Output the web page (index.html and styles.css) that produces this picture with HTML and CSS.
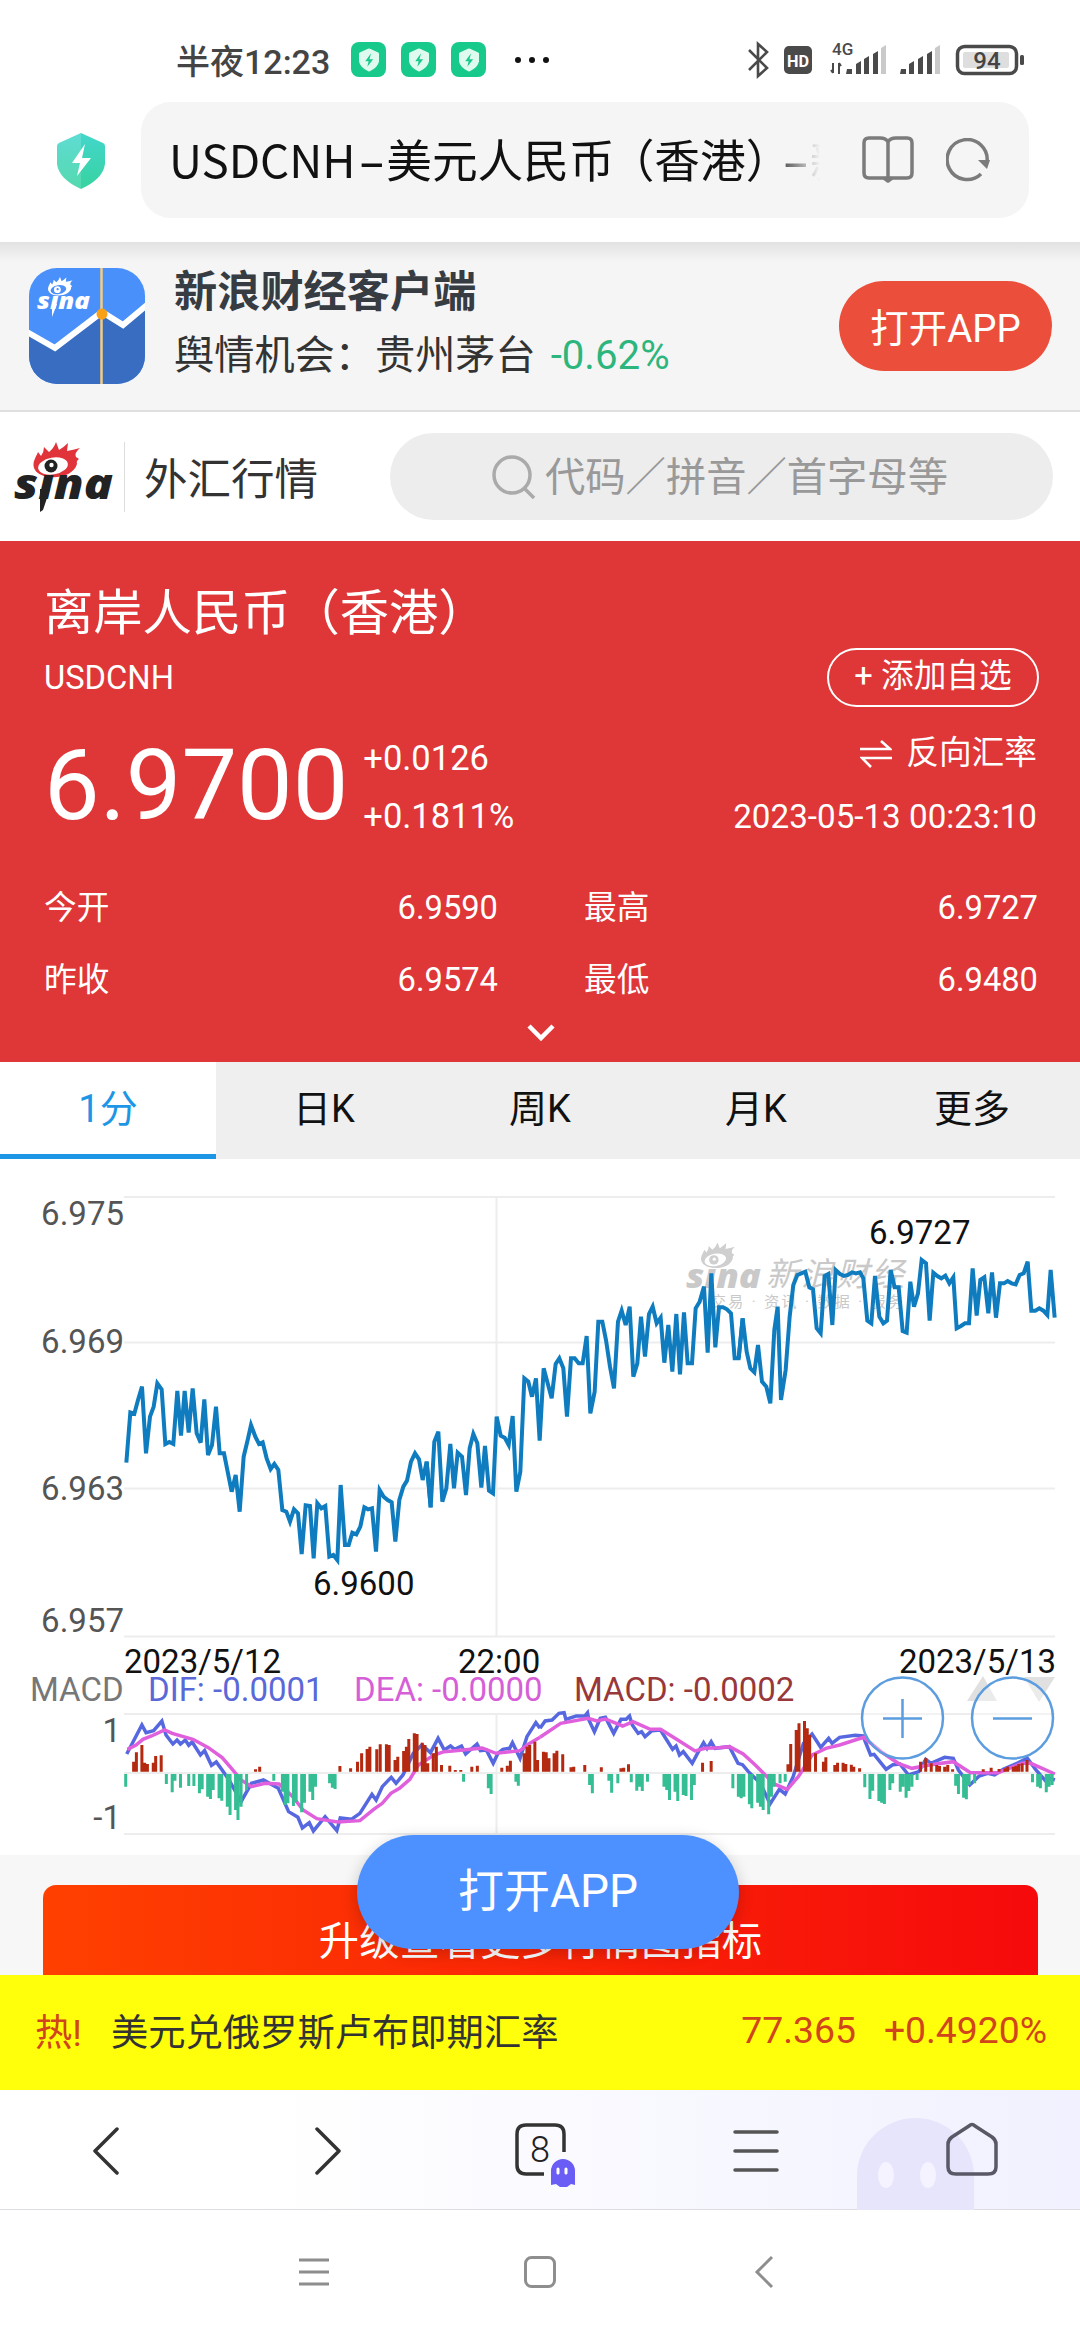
FILE: index.html
```html
<!DOCTYPE html>
<html lang="zh-CN">
<head>
  <meta charset="UTF-8" />
  <meta name="viewport" content="width=device-width, initial-scale=1.0" />
  <title>USDCNH-美元人民币（香港）</title>
  <link rel="stylesheet" href="styles.css">
</head>
<body>
  <!-- shared shapes -->
  <svg width="0" height="0" class="defs">
    <symbol id="shield" viewBox="0 0 48 56">
      <path d="M24 0 L46 10 Q48 11 48 13 V31 Q46 46 24 56 Q2 46 0 31 V13 Q0 11 2 10 Z"/>
    </symbol>
    <symbol id="eye" viewBox="0 0 48 36">
      <path d="M2 26 C0 20 4 15 6 10 L9 14 Q12 10 12 5 L17 10 Q22 6 24 0 L27 8 Q32 5 36 1 L35 9 Q41 8 48 6 Q42 11 44 15 L47 17 Q44 19 45 22 C42 32 30 36 18 35 C9 34 4 31 2 26 Z"/>
      <ellipse cx="21" cy="24" rx="15" ry="8.500" class="white" transform="rotate(-10 21 24)"/>
      <circle cx="19" cy="24" r="6.500" class="pupil"/>
      <circle cx="19.500" cy="23" r="2.200" class="white"/>
    </symbol>
  </svg>

  <div class="status">
    <span class="clock">半夜12:23</span>
    <div class="apps">
      <span class="app"><svg width="20" height="24" viewBox="0 0 48 56"><use href="#shield" fill="#dffbf0"/><path d="M29 12 L15 31 H23 L20 44 L34 26 H25 Z" fill="#18c98c"/></svg></span>
      <span class="app"><svg width="20" height="24" viewBox="0 0 48 56"><use href="#shield" fill="#dffbf0"/><path d="M29 12 L15 31 H23 L20 44 L34 26 H25 Z" fill="#18c98c"/></svg></span>
      <span class="app"><svg width="20" height="24" viewBox="0 0 48 56"><use href="#shield" fill="#dffbf0"/><path d="M29 12 L15 31 H23 L20 44 L34 26 H25 Z" fill="#18c98c"/></svg></span>
    </div>
    <div class="dots"><i></i><i></i><i></i></div>
    <svg class="signals" width="280" height="40" viewBox="744 39 280 40">
      <path d="M748 49 L766 67 L757 75 V43 L766 51 L748 69" fill="none" stroke="#4a4a4a" stroke-width="2.600"/>
      <rect x="783" y="45" width="28" height="28" rx="5" fill="#4a4a4a"/>
      <text x="797" y="65.500" font-size="17" font-weight="700" fill="#fff" text-anchor="middle" textLength="22" lengthAdjust="spacingAndGlyphs">HD</text>
      <text x="831" y="54" font-size="17" font-weight="500" fill="#4a4a4a">4G</text>
      <path d="M832 62 V72 M830 69 L832 72 M838 73 V62 M840 65 L838 62" fill="none" stroke="#4a4a4a" stroke-width="2"/>
      <g fill="#4a4a4a">
        <path d="M846 68 h5 v5 h-6z M855 63 l5 -3 v13 h-5z M863 58 l5 -3 v18 h-5z M872 53 l5 -3 v23 h-5z"/>
        <path d="M900 68 h5 v5 h-6z M908 63 l5 -3 v13 h-5z M917 58 l5 -3 v18 h-5z M926 53 l5 -3 v23 h-5z"/>
      </g>
      <path d="M880 47 l5 -3 v29 h-5z M934 47 l5 -3 v29 h-5z" fill="#c9c9c9"/>
      <rect x="956.500" y="45.500" width="59" height="27" rx="7" fill="#fff" stroke="#4a4a4a" stroke-width="3.500"/>
      <rect x="962" y="51" width="46" height="16" rx="2" fill="#dedede"/>
      <rect x="1019" y="54" width="4" height="10" rx="1.500" fill="#4a4a4a"/>
      <text x="986" y="68" font-size="24" font-weight="500" fill="#444" text-anchor="middle">94</text>
    </svg>
  </div>

  <div class="address">
    <svg class="safe" width="48" height="56" viewBox="0 0 48 56">
      <defs><linearGradient id="mint" x1="0" y1="0" x2="0" y2="1"><stop offset="0" stop-color="#43d6cc"/><stop offset="1" stop-color="#37d3a0"/></linearGradient></defs>
      <path d="M24 0 L46 10 Q48 11 48 13 V31 Q46 46 24 56 Q2 46 0 31 V13 Q0 11 2 10 Z" fill="url(#mint)"/>
      <path d="M24 0 L2 10 Q0 11 0 13 V31 Q2 46 24 56 Z" fill="#fff" opacity=".15"/>
      <path d="M28 11 L15 30 H23 L20 43 L34 25 H25 Z" fill="#fff"/>
    </svg>
    <div class="url">
      <span class="url-text">USDCNH<b class="dash">–</b>美元人民币<b class="po">（</b>香港<b class="pc">）</b><b class="dash">–</b>新</span>
      <svg width="52" height="48" viewBox="0 0 52 48" fill="none" stroke="#7b7b7b" stroke-width="3.500" stroke-linejoin="round">
        <path d="M26 42 V6 Q24 2 18 2 H7 Q2 2 2 7 V37 Q2 42 7 42 H45 Q50 42 50 37 V7 Q50 2 45 2 H34 Q28 2 26 6"/>
        <path d="M22 42 L26 45 L30 42"/>
      </svg>
      <svg width="44" height="44" viewBox="0 0 44 44">
        <path d="M35 36 A20 20 0 1 1 41 24" fill="none" stroke="#7b7b7b" stroke-width="3.500"/>
        <path d="M32 22 H44 L41 31 Z" fill="#7b7b7b"/>
      </svg>
    </div>
  </div>

  <div class="banner">
    <svg width="116" height="116" viewBox="0 0 116 116">
      <defs><clipPath id="round"><rect width="116" height="116" rx="28"/></clipPath></defs>
      <g clip-path="url(#round)">
        <rect width="116" height="116" fill="#4a90fb"/>
        <path d="M0 67 L26 81 L73 46 L94 58 L116 40 V116 H0 Z" fill="#386dc2"/>
        <path d="M-2 64 L26 80 L73 44 L94 57 L118 37" fill="none" stroke="#fff" stroke-width="6"/>
        <path d="M72.500 0 V116" stroke="#f3cd80" stroke-width="2.500"/>
        <circle cx="73" cy="46" r="5.500" fill="#f8a016"/>
      </g>
      <svg x="18" y="9" width="26" height="19" viewBox="0 0 48 36" fill="#fff" class="eye-app"><use href="#eye"/></svg>
      <text x="8" y="41" class="sina-word" font-size="23" fill="#fff" textLength="53" lengthAdjust="spacingAndGlyphs">sına</text>
      <path d="M23 36 L28 36 L23 49 Z" fill="#fff"/>
    </svg>
    <div class="banner-text">
      <div class="banner-title">新浪财经客户端</div>
      <div class="banner-sub">舆情机会：贵州茅台 <span>-0.62%</span></div>
    </div>
    <a class="open-small">打开APP</a>
  </div>

  <div class="topbar">
    <svg width="102" height="72" viewBox="0 0 102 72">
      <svg x="19" y="1" width="48" height="36" viewBox="0 0 48 36" fill="#e0343a"><use href="#eye"/></svg>
      <text x="1" y="58" class="sina-word" font-size="42" fill="#222" textLength="99" lengthAdjust="spacingAndGlyphs">sına</text>
      <path d="M27 48 L37 48 L30 69 L27 71 Z" fill="#222"/>
    </svg>
    <span class="channel">外汇行情</span>
    <div class="search">
      <svg width="44" height="44" viewBox="0 0 44 44" fill="none" stroke="#aaa" stroke-width="3.500"><circle cx="20" cy="20" r="18"/><path d="M32 33 L42 43"/></svg>
      <span>代码／拼音／首字母等</span>
    </div>
  </div>

  <div class="quote">
    <div class="name">离岸人民币（香港）</div>
    <div class="row code-row">
      <span>USDCNH</span>
      <a class="add">+ 添加自选</a>
    </div>
    <div class="row price-row">
      <div class="price">6.9700</div>
      <div class="change"><span>+0.0126</span><span>+0.1811%</span></div>
      <div class="side">
        <span class="reverse"><svg width="32" height="28" viewBox="0 0 32 28" fill="none" stroke="#fff" stroke-width="2.600"><path d="M0 9 H30 L21 1 M32 18 H2 L11 27"/></svg>反向汇率</span>
        <span class="time">2023-05-13 00:23:10</span>
      </div>
    </div>
    <div class="stats">
      <div><span>今开</span><span>6.9590</span></div>
      <div><span>最高</span><span>6.9727</span></div>
      <div><span>昨收</span><span>6.9574</span></div>
      <div><span>最低</span><span>6.9480</span></div>
    </div>
    <svg class="more" width="30" height="20" viewBox="0 0 30 20"><path d="M3 3 L15 15 L27 3" fill="none" stroke="#fff" stroke-width="4.500"/></svg>
  </div>

  <div class="tabs">
    <a class="active">1分</a>
    <a>日K</a>
    <a>周K</a>
    <a>月K</a>
    <a>更多</a>
  </div>

  <svg class="chart" width="1080" height="696" viewBox="0 1159 1080 696">
    <!-- watermark -->
    <g class="mark">
      <svg x="700" y="1242" width="35" height="27" viewBox="0 0 48 36" fill="#cfcfcf"><use href="#eye"/></svg>
      <text x="686" y="1288" class="sina-word" font-size="32" textLength="75" lengthAdjust="spacingAndGlyphs">sına</text>
      <text x="766" y="1286" font-size="34" font-style="italic" textLength="138">新浪财经</text>
      <text x="711" y="1307" font-size="14" textLength="192">交易 · 资讯 · 数据 · 服务</text>
    </g>

    <path class="grid" d="M124 1197 H1055 M124 1342.500 H1055 M124 1488.500 H1055 M124 1636.500 H1055 M496.500 1197 V1636 M124 1714 H1055 M124 1773 H1055 M124 1834 H1055 M496.500 1714 V1834"/>

    <g class="axis" text-anchor="end">
      <text x="124" y="1225">6.975</text>
      <text x="124" y="1353">6.969</text>
      <text x="124" y="1500">6.963</text>
      <text x="124" y="1632">6.957</text>
      <text x="121" y="1742">1</text>
      <text x="121" y="1829">-1</text>
    </g>

    <g class="price-line" transform="translate(100 1170) scale(.33333)">
      <polyline points="79,878 91,727 103,731 114,690 126,650 138,850 150,740 161,710 172,640 185,658 196,822 208,816 220,822 232,663 243,797 254,663 266,788 278,655 290,790 302,818 313,688 324,855 336,825 348,710 359,850 372,850 384,910 395,965 407,915 419,1025 431,860 443,810 453,765 466,800 477,822 488,817 500,865 512,897 523,882 535,900 547,1020 559,1025 570,1055 582,1018 594,1030 605,1152 617,1006 630,1008 641,1165 652,1000 664,1015 676,1008 688,1160 700,1155 712,1170 722,945 735,1125 746,1125 757,1088 769,1093 781,1070 793,1012 804,1018 816,1015 828,1145 839,960 851,980 863,990 875,997 886,1115 898,990 910,950 921,932 933,875 945,850 957,868 968,930 980,875 992,1012"/>
      <polyline transform="translate(960)" points="20,875 32,1012 43,815 55,785 67,995 79,955 91,822 102,955 113,848 126,860 138,975 149,835 160,792 172,820 184,953 195,828 207,962 219,970 230,740 242,797 254,803 266,825 278,738 289,965 301,905 313,625 325,635 336,680 348,625 359,812 371,595 383,640 395,685 407,582 418,565 430,595 441,740 453,565 464,565 476,580 488,580 500,498 511,730 524,665 535,455 547,455 558,510 570,590 582,655 594,455 605,422 617,465 629,410 640,620 652,580 663,440 675,560 687,432 698,410 710,460 722,443 733,578 745,465 757,605 769,432 780,613 792,427 803,580 816,580 827,415 839,395 852,350 863,548 874,310 886,532 897,412 909,412 921,418 933,430 944,565 956,565 968,445"/>
      <polyline transform="translate(1920)" points="-4,565 8,445 20,545 31,595 43,607 54,525 66,635 79,650 91,700 103,480 113,410 123,690 137,600 149,440 160,345 172,315 184,310 196,305 208,352 219,358 230,475 242,490 254,318 265,312 277,465 287,300 300,312 312,318 324,315 336,307 348,310 360,307 370,325 382,452 394,460 405,318 418,440 430,460 441,452 452,300 464,352 476,352 488,483 500,488 511,335 522,410 534,370 545,270 558,280 569,452 580,308 592,318 604,325 616,317 628,340 640,322 650,475 663,468 675,460 687,460 698,295 710,437 721,330 733,322 745,430 756,307 768,443 780,340 792,340 803,333 815,340 827,343 839,315 851,310 863,275 874,422 886,422 898,415 910,422 922,435 932,300 944,443"/>
    </g>

    <g class="label">
      <text x="869" y="1244">6.9727</text>
      <text x="313" y="1595">6.9600</text>
      <text x="124" y="1673">2023/5/12</text>
      <text x="458" y="1673">22:00</text>
      <text x="1056" y="1673" text-anchor="end">2023/5/13</text>
    </g>

    <text x="30" y="1701" fill="#777">MACD</text>
    <text x="148" y="1701" fill="#5a68d8">DIF: -0.0001</text>
    <text x="354" y="1701" fill="#d65fd8">DEA: -0.0000</text>
    <text x="574" y="1701" fill="#98383a">MACD: -0.0002</text>

    <g class="macd" transform="translate(0 1620) scale(.3444 .3333)">
      <polyline class="dif" points="368,402 412,315 424,338 446,332 470,303 482,345 502,372 514,360 524,372 538,360 548,376 558,366 582,405 594,392 614,436 628,426 645,450 665,480 700,545 730,490 765,480 808,505 838,575 865,592 878,624 898,608 910,633 944,590 978,632 988,594 1020,598 1045,580 1080,523 1092,540 1110,500 1136,472 1150,490 1170,465 1200,400 1225,375 1250,398 1272,355 1290,390 1308,378 1320,388 1340,378 1352,402 1385,372 1395,392 1412,390 1432,430 1446,400 1460,388 1480,385 1488,368 1510,415 1530,350 1556,308 1568,325"/>
      <polyline class="dea" points="370,388 395,375 415,358 440,348 478,330 500,340 560,358 605,383 645,413 672,445 700,480 730,500 770,490 810,492 850,530 880,570 920,596 980,606 1045,602 1085,568 1110,550 1135,520 1160,505 1190,478 1215,435 1260,405 1290,395 1345,390 1400,384 1440,400 1510,392 1535,372 1568,352"/>
      <path id="up1" class="up"/>
      <path id="down1" class="down"/>
    </g>
    <g class="macd" transform="translate(540 1620) scale(.3444 .3333)">
      <polyline class="dif" points="0,325 15,303 35,300 55,280 70,278 75,298 105,288 130,288 138,278 142,300 158,335 175,295 190,292 214,340 235,298 250,298 260,288 268,315 285,340 295,335 305,350 325,332 350,330 368,360 385,388 395,378 405,405 416,395 442,430 460,395 475,368 485,385 497,365 508,385 550,380 575,430 588,434 605,455 640,490 668,552 695,508 712,522 735,470 765,370 790,342 815,382 838,355 848,370 870,352 915,346 938,348 960,405 970,403 1005,448 1025,434 1045,432 1070,465 1100,455 1120,418 1135,430 1175,412 1200,415 1215,450 1248,495 1275,468 1300,460 1320,465 1345,448 1385,430 1415,415 1440,450 1470,485 1480,475 1495,480"/>
      <polyline class="dea" points="0,352 60,310 140,295 165,303 190,297 240,318 270,305 320,328 350,328 400,360 450,393 480,385 520,383 550,380 590,402 625,435 680,492 718,508 750,470 790,405 830,385 870,375 940,352 990,395 1040,430 1080,445 1130,435 1200,425 1250,458 1330,458 1400,430 1425,430 1495,462"/>
      <path id="up2" class="up"/>
      <path id="down2" class="down"/>
    </g>

    <path d="M967 1701 L983 1676 L997 1701 Z M1024 1677 H1055 L1039 1702 Z" fill="#e0e0e0"/>
    <g fill="#fff" fill-opacity=".35" stroke="#5c9ddf" stroke-width="2.500">
      <circle cx="902.500" cy="1718" r="40.500"/>
      <circle cx="1012.500" cy="1718" r="40.500"/>
      <path d="M883 1718.500 H922 M902.500 1699 V1738 M993 1718.500 H1032"/>
    </g>
  </svg>

  <div class="upgrade">
    <div class="upgrade-btn">升级查看更多行情图指标</div>
    <a class="open-big">打开APP</a>
  </div>

  <div class="hot">
    <span class="tag">热!</span>
    <span class="pair">美元兑俄罗斯卢布即期汇率</span>
    <span class="num">77.365</span>
    <span class="num">+0.4920%</span>
  </div>

  <div class="browser-nav">
    <svg width="1080" height="120" viewBox="0 2089 1080 120" fill="none" stroke="#333" stroke-width="3.500" stroke-linecap="round" stroke-linejoin="round">
      <path d="M857 2209 V2175 A58.500 58 0 0 1 974 2175 V2209 Z" fill="#e7e5fb" stroke="none"/>
      <ellipse cx="886" cy="2174" rx="8" ry="13" fill="#f4f3ff" stroke="none"/>
      <ellipse cx="928" cy="2174" rx="8" ry="13" fill="#f4f3ff" stroke="none"/>
      <path d="M117 2128 L95 2150 L117 2172 M317 2128 L339 2150 L317 2172"/>
      <path d="M544 2173 H526 Q517 2173 517 2164 V2133 Q517 2124 526 2124 H555 Q564 2124 564 2133 V2151" stroke-linecap="butt"/>
      <text x="540" y="2161" font-size="36" font-weight="300" text-anchor="middle" fill="#222" stroke="none">8</text>
      <path d="M551 2184 V2170 A12 12 0 0 1 575 2170 V2184 L571 2183 L567 2186 H560 L556 2183 Z" fill="#6a5df5" stroke="none"/>
      <path d="M558 2168 V2172 M566 2168 V2172" stroke="#fff" stroke-width="3"/>
      <path d="M735 2131 H777 M735 2150 H777 M735 2169 H777" stroke="#555"/>
      <path d="M969 2125 Q972 2122 975 2125 L992 2136 Q996 2139 996 2143 V2166 Q996 2173 988 2173 H956 Q948 2173 948 2166 V2143 Q948 2139 952 2136 Z" stroke="#5a5866"/>
    </svg>
  </div>

  <div class="system-nav">
    <svg width="34" height="34" viewBox="0 0 34 34"><path d="M2 5 H32 M2 17 H32 M2 29 H32"/></svg>
    <svg width="34" height="34" viewBox="0 0 34 34"><rect x="2.500" y="2.500" width="29" height="29" rx="6"/></svg>
    <svg width="34" height="34" viewBox="0 0 34 34"><path d="M24 2 L9 17 L24 32"/></svg>
  </div>

  <script>
    // x:y pairs, every pair is one MACD bar
    const bars = {
      up1: [455, '388:425 396:397 412:375 420:428 428:432 445:428 452:408 468:406 742:448 754:440 987:438 1018:445 1038:425 1050:400 1066:387 1074:380 1094:388 1104:373 1122:373 1130:375 1147:420 1155:410 1172:393 1180:380 1187:357 1203:340 1211:342 1226:368 1234:375 1242:430 1258:400 1267:380 1282:435 1306:437 1322:450 1338:450 1370:440 1386:437 1457:443 1473:437 1482:422 1522:400 1530:380 1538:375 1553:365 1561:420'],
      down1: [462, '365:500 483:492 500:517 508:482 524:503 548:498 563:498 579:520 587:508 603:530 611:537 619:510 636:535 644:542 660:560 668:585 684:570 691:600 700:560 716:510 795:482 820:515 828:555 836:550 852:558 860:545 876:577 884:548 900:515 908:540 916:500 957:490 965:503 973:507 1346:485 1418:505 1426:522 1498:485 1505:497'],
      up2: [455, '10:395 18:397 26:415 41:400 49:392 66:403 90:442 98:440 130:435 178:442 235:445 243:443 257:433 472:428 497:423 720:433 728:372 744:330 752:310 768:303 776:325 783:345 800:400 823:425 830:412 856:435 864:428 880:428 888:432 904:434 911:440 928:445 1105:425 1120:415 1136:430 1152:435 1160:438 1175:440 1184:435 1198:448 1287:448 1310:443 1333:447 1350:445 1358:440 1374:440 1382:437 1390:432 1400:430 1414:420'],
      down2: [462, '144:495 152:520 200:482 208:518 226:490 265:487 281:512 289:500 297:513 312:485 360:500 368:510 376:540 392:515 400:543 416:525 424:528 440:540 448:495 560:505 576:530 584:535 592:530 608:553 615:565 632:548 640:560 648:570 664:583 672:530 680:500 697:490 712:485 943:502 958:537 966:512 984:543 992:548 1000:552 1016:510 1024:490 1046:515 1054:500 1063:533 1071:513 1080:500 1095:480 1207:497 1215:522 1230:533 1238:538 1246:495 1262:490 1430:487 1445:500 1453:505 1470:517 1478:500 1487:495']
    };

    for (const id in bars) {
      const base = bars[id][0];
      const d = bars[id][1].split(' ').map(p => {
        const xy = p.split(':');
        return 'M' + xy[0] + ' ' + base + 'V' + xy[1];
      }).join('');
      document.getElementById(id).setAttribute('d', d);
    }
  </script>
</body>
</html>
```

FILE: styles.css
```css
* {
  box-sizing: border-box;
}
body, html {
  margin: 0;
  padding: 0;
  background-color: #fff;
  color: #333;
  font-family: Roboto, "Noto Sans CJK SC", sans-serif;
}
body {
  width: 1080px;
  height: 2340px;
  overflow: hidden;
}
svg {
  display: block;
  flex: none;
}
svg text {
  font-family: Roboto, "Noto Sans CJK SC", sans-serif;
}
.defs {
  position: absolute;
}
/* eye colours are set per logo */
.white {
  fill: var(--white, #fff);
}
.pupil {
  fill: var(--pupil, #222);
}
.eye-app {
  --white: #4a90fb;
  --pupil: #fff;
}
.mark {
  --pupil: #cfcfcf;
}
svg .sina-word {
  font-family: "Open Sans", sans-serif;
  font-weight: 800;
  font-style: italic;
}

/* status bar */
.status {
  height: 102px;
  padding: 17px 55px 0 176px;
  display: flex;
  align-items: center;
}
.clock {
  width: 175px;
  font-size: 34px;
  font-weight: 500;
  color: #444;
  white-space: nowrap;
}
.apps {
  display: flex;
  gap: 15px;
}
.app {
  width: 35px;
  height: 35px;
  border-radius: 8px;
  background-color: #18c98c;
  display: flex;
  align-items: center;
  justify-content: center;
}
.dots {
  display: flex;
  gap: 8px;
  margin-left: 29px;
}
.dots i {
  width: 6px;
  height: 6px;
  border-radius: 3px;
  background-color: #111;
}
.signals {
  margin-left: auto;
}

/* address bar */
.address {
  height: 140px;
  padding-left: 57px;
  display: flex;
  align-items: flex-start;
}
.safe {
  margin-top: 31px;
}
.url {
  width: 888px;
  height: 116px;
  margin-left: 36px;
  padding-left: 28px;
  border-radius: 30px;
  background-color: #f5f5f5;
  display: flex;
  align-items: center;
}
.url-text {
  width: 651px;
  height: 72px;
  margin: -5px 42px 0 0;
  overflow: hidden;
  white-space: nowrap;
  font-family: "Noto Sans CJK SC", sans-serif;
  font-size: 45.7px;
  line-height: 72px;
  color: #111;
  -webkit-mask-image: linear-gradient(90deg, #000 92%, transparent 100%);
  mask-image: linear-gradient(90deg, #000 92%, transparent 100%);
}
.url-text b {
  font-weight: 400;
}
.url-text .dash {
  margin: 0 2px 0 4px;
  font-weight: 500;
}
.po {
  margin-left: -6px;
}
.pc {
  margin-right: -12px;
}
.url svg + svg {
  margin-left: 32px;
}

/* app banner */
.banner {
  height: 170px;
  padding: 0 28px 1px 29px;
  background: linear-gradient(#e2e2e2, #f5f5f5 20px);
  border-bottom: 2px solid #dfdfdf;
  display: flex;
  align-items: center;
}
.banner-text {
  margin-left: 29px;
}
.banner-title {
  font-size: 43.2px;
  line-height: 62px;
  font-weight: 700;
  color: #363c42;
}
.banner-sub {
  margin-bottom: 1px;
  font-size: 40.2px;
  line-height: 64px;
  white-space: nowrap;
}
.banner-sub span {
  margin-left: 5px;
  color: #2cb57c;
}
.open-small {
  width: 213px;
  height: 90px;
  margin-left: auto;
  border-radius: 45px;
  background-color: #eb4f3c;
  color: #fff;
  font-size: 38.4px;
  line-height: 95px;
  text-align: center;
}

/* channel + search */
.topbar {
  height: 129px;
  padding-left: 13px;
  display: flex;
  align-items: center;
}
.channel {
  height: 70px;
  margin-left: 9px;
  padding-left: 19px;
  border-left: 1px solid #ddd;
  font-size: 43.5px;
  line-height: 77px;
}
.search {
  width: 663px;
  height: 87px;
  margin-left: 72px;
  padding-left: 102px;
  border-radius: 44px;
  background-color: #ededed;
  color: #999;
  font-size: 40.3px;
  display: flex;
  align-items: center;
  gap: 9px;
}
.search span {
  margin-top: -6px;
}

/* quote */
.quote {
  height: 521px;
  padding: 38px 43px 0 44px;
  background-color: #df3638;
  color: #fff;
  font-size: 32.7px;
}
.name {
  font-size: 49.3px;
  line-height: 68px;
}
.row {
  display: flex;
  justify-content: space-between;
}
.code-row {
  align-items: center;
  height: 61px;
}
.add {
  width: 212px;
  height: 59px;
  margin-right: -2px;
  border: 2px solid #fff;
  border-radius: 30px;
  line-height: 53px;
  text-align: center;
}
.price-row {
  height: 130px;
  margin-top: 15px;
}
.price {
  font-size: 99px;
  line-height: 125px;
}
.change, .side {
  display: flex;
  flex-direction: column;
  line-height: 58px;
  padding-top: 6px;
}
.change {
  margin-left: 15px;
  font-size: 34.5px;
}
.side {
  margin-left: auto;
  margin-top: -7px;
  align-items: flex-end;
  line-height: 63px;
}
.reverse {
  display: flex;
  align-items: center;
  gap: 14px;
}
.time {
  font-size: 33.2px;
}
.stats {
  margin-top: 19px;
  display: grid;
  grid-template-columns: 454px 454px;
  column-gap: 86px;
  line-height: 72px;
}
.stats div {
  display: flex;
  justify-content: space-between;
}
.more {
  margin: 7px auto 0;
}

/* tabs */
.tabs {
  height: 97px;
  display: flex;
  background-color: #efefef;
}
.tabs a {
  flex: 1;
  color: #111;
  font-size: 38px;
  line-height: 95px;
  text-align: center;
}
.tabs .active {
  background-color: #fff;
  border-bottom: 5px solid #1e96e6;
  color: #1e96e6;
}

/* chart */
.chart text {
  font-size: 33px;
}
.chart .mark text {
  fill: #c9c9c9;
}
.chart .mark text:nth-of-type(3) {
  font-size: 15px;
}
.grid {
  fill: none;
  stroke: #ededed;
  stroke-width: 2;
}
.axis {
  fill: #555;
}
.label {
  fill: #111;
}
.price-line polyline {
  fill: none;
  stroke: #0e7cbf;
  stroke-width: 12;
}
.macd * {
  fill: none;
  vector-effect: non-scaling-stroke;
}
.dif {
  stroke: #5668e0;
  stroke-width: 3.500;
}
.dea {
  stroke: #e05fdc;
  stroke-width: 3.500;
}
.up {
  stroke: #b4290f;
  stroke-width: 3;
}
.down {
  stroke: #35bd93;
  stroke-width: 3;
}

/* upgrade */
.upgrade {
  position: relative;
  height: 120px;
  padding: 30px 42px 0 43px;
  background-color: #f7f7f7;
}
.upgrade-btn {
  height: 90px;
  border-radius: 13px 13px 0 0;
  background: linear-gradient(90deg, #ff4000, #f60a0c);
  color: #fff;
  font-size: 40.3px;
  line-height: 114px;
  text-align: center;
  overflow: hidden;
}
/* floats over the chart and the upgrade button */
.open-big {
  position: absolute;
  left: 357px;
  top: -20px;
  width: 382px;
  height: 114px;
  border-radius: 57px;
  background-color: #4d90ff;
  box-shadow: 0 4px 16px rgba(0, 0, 0, 0.2);
  color: #fff;
  font-size: 46px;
  line-height: 112px;
  text-align: center;
}

/* hot bar */
.hot {
  height: 115px;
  padding: 0 33px 5px 35px;
  background-color: #ffff0c;
  display: flex;
  align-items: center;
  font-size: 37.3px;
}
.tag, .num {
  color: #d0451c;
}
.pair {
  margin: 0 auto 0 29px;
}
.num + .num {
  margin-left: 28px;
}

/* bottom bars */
.browser-nav {
  height: 120px;
  background: linear-gradient(90deg, #fff 25%, #f1f1ff);
  border-bottom: 1px solid #dcdce2;
}
.system-nav {
  height: 130px;
  padding: 45px 298px 0 297px;
  display: flex;
  justify-content: space-between;
}
.system-nav svg {
  fill: none;
  stroke: #8e8e8e;
  stroke-width: 3;
}
```
